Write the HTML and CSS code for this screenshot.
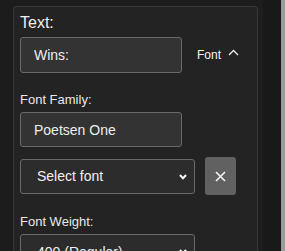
FILE: index.html
```html
<!DOCTYPE html>
<html lang="en">
<head>
    <meta charset="UTF-8">
    <title>Text Settings</title>
    <link rel="stylesheet" href="styles.css">
</head>
<body>
    <div class="layout">
        <div class="gutter"></div>
        <div class="panel">
            <label class="title-label">Text:</label>
            <div class="text-row">
                <input type="text" class="field" value="Wins:">
                <button class="font-toggle">
                    Font
                    <svg width="11" height="7" viewBox="0 0 11 7"><path d="M1 6 L5.5 1.5 L10 6" fill="none" stroke="#eee" stroke-width="1.3"/></svg>
                </button>
            </div>

            <label class="label">Font Family:</label>
            <input type="text" class="field field-sm" value="Poetsen One">

            <div class="select-row">
                <div class="select-wrap">
                    <select class="select">
                        <option>Select font</option>
                    </select>
                    <svg class="select-arrow" width="8" height="6" viewBox="0 0 8 6"><path d="M1 1 L4 4.3 L7 1" fill="none" stroke="#fff" stroke-width="2"/></svg>
                </div>
                <button class="clear-btn">
                    <svg width="11" height="11" viewBox="0 0 11 11"><path d="M1 1 L10 10 M10 1 L1 10" stroke="#f2f2f2" stroke-width="1.6"/></svg>
                </button>
            </div>

            <label class="label">Font Weight:</label>
            <div class="select-wrap">
                <select class="select">
                    <option>400 (Regular)</option>
                </select>
                <svg class="select-arrow" width="8" height="6" viewBox="0 0 8 6"><path d="M1 1 L4 4.3 L7 1" fill="none" stroke="#fff" stroke-width="2"/></svg>
            </div>
        </div>
        <div class="side"></div>
        <div class="scrollbar"></div>
    </div>
</body>
</html>
```

FILE: styles.css
```css
* {
    margin: 0;
    padding: 0;
    box-sizing: border-box;
}

body {
    background: #1c1c1c;
    color: #eee;
    font-family: 'Liberation Sans', Arial, sans-serif;
    overflow: hidden;
}

.layout {
    display: flex;
    height: 251px;
    overflow: hidden;
}

.gutter {
    width: 13px;
    flex-shrink: 0;
}

.panel {
    width: 245px;
    flex-shrink: 0;
    margin-top: 6px;
    background: #232323;
    border: 1px solid #383838;
    border-bottom: none;
    border-radius: 4px 4px 0 0;
    padding: 7px 6px;
    display: flex;
    flex-direction: column;
    align-items: flex-start;
    overflow: hidden;
}

.panel > * {
    flex-shrink: 0;
}

.side {
    flex: 1;
    background: #191919;
    border-left: 5px solid #1e1e1e;
}

.scrollbar {
    width: 4px;
    background: #9a9a9a;
}

.title-label {
    font-size: 16px;
    line-height: 18px;
    color: #f0f0f0;
}

.text-row {
    display: flex;
    align-items: center;
    margin-top: 5px;
}

.field {
    width: 162px;
    height: 36px;
    padding: 0 13px;
    background: #333;
    border: 1px solid #6a6a6a;
    border-radius: 3px;
    color: #eee;
    font-family: 'Liberation Sans', Arial, sans-serif;
    font-size: 14px;
    outline: none;
}

.field-sm {
    height: 35px;
}

.font-toggle {
    display: flex;
    align-items: center;
    gap: 7px;
    margin-left: 15px;
    background: none;
    border: none;
    color: #f4f4f4;
    font-family: 'Liberation Sans', Arial, sans-serif;
    font-size: 12px;
}

.font-toggle svg {
    margin-top: -6px;
}

.label {
    font-size: 13px;
    line-height: 15px;
    color: #e8e8e8;
    margin-top: 19px;
    margin-bottom: 5px;
}

.select-row {
    display: flex;
    align-items: center;
    gap: 10px;
    margin-top: 10px;
}

.select-wrap {
    position: relative;
    width: 175px;
    height: 35px;
}

.select {
    appearance: none;
    -webkit-appearance: none;
    width: 100%;
    height: 100%;
    padding: 0 16px;
    background: #2c2c2c;
    border: 1px solid #6a6a6a;
    border-radius: 3px;
    color: #f0f0f0;
    font-family: 'Liberation Sans', Arial, sans-serif;
    font-size: 14px;
    outline: none;
}

.select-arrow {
    position: absolute;
    right: 8px;
    top: 15px;
    pointer-events: none;
}

.clear-btn {
    display: flex;
    align-items: center;
    justify-content: center;
    width: 31px;
    height: 38px;
    background: #616161;
    border: none;
    border-radius: 3px;
}
```
